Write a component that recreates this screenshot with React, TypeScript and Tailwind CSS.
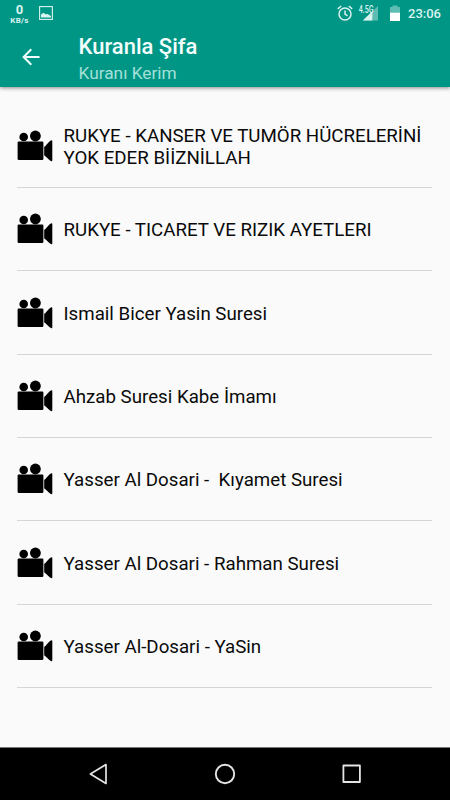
const videos = [
  'RUKYE - KANSER VE TUMÖR HÜCRELERİNİ YOK EDER BİİZNİLLAH',
  'RUKYE - TICARET VE RIZIK AYETLERI',
  'Ismail Bicer Yasin Suresi',
  'Ahzab Suresi Kabe İmamı',
  'Yasser Al Dosari -  Kıyamet Suresi',
  'Yasser Al Dosari - Rahman Suresi',
  'Yasser Al-Dosari - YaSin',
];

function CameraIcon() {
  return (
    <svg className="h-8 w-9 shrink-0" viewBox="0 0 36 32" fill="#000">
      <circle cx="6.7" cy="7" r="4.3" />
      <circle cx="18.4" cy="6" r="5.4" />
      <rect x="0.6" y="11.5" width="25.8" height="18.5" rx="1.2" />
      <path d="M27.2 16.7C28.8 16.1 31.8 11.5 33.9 10.4Q35.3 9.8 35.3 11.1V30.2Q35.3 31.7 33.9 31.1C31.8 29.8 28.8 26 27.2 25.4Z" />
    </svg>
  );
}

function StatusBar() {
  return (
    <div className="flex h-[27px] items-start justify-between pr-[9px] pl-[10px] text-[#d9f3ef]">
      <div className="flex">
        <div className="flex w-[19px] flex-col items-center pt-[2px] font-bold">
          <span className="text-[13px] leading-[15px]">0</span>
          <span className="text-[8px] leading-[7px] tracking-[0.3px]">KB/s</span>
        </div>
        <svg className="mt-[6px] ml-[10px] h-[14px] w-[14px]" viewBox="0 0 14 14">
          <rect x="0.6" y="0.6" width="12.8" height="12.8" fill="none" stroke="currentColor" strokeWidth="1.1" />
          <path d="M2 11.5V8.5L4.5 6.8 6.5 8.3 8.5 8 12 10V11.5Z" fill="currentColor" />
        </svg>
      </div>
      <div className="flex">
        <svg
          className="mt-[5px] h-4 w-4"
          viewBox="0 0 16 16"
          fill="none"
          stroke="currentColor"
          strokeWidth="1.5"
        >
          <circle cx="8" cy="9" r="6" />
          <path d="M8 5.5V9.2L10.6 10.8M0.8 3.8L4.2 1M15.2 3.8L11.8 1" />
        </svg>
        <svg className="mt-px ml-[5px] h-5 w-[21px]" viewBox="0 -2 21 20">
          <path d="M20 3V17.5H5Z" fill="#5dbdb2" />
          <path d="M14.3 8.3V17.5H4.8Z" fill="currentColor" />
          <text x="0.7" y="9.6" fill="currentColor" fontSize="10.5" fontWeight="500" textLength="14.8" lengthAdjust="spacingAndGlyphs">
            4.5G
          </text>
        </svg>
        <svg className="mt-[5px] ml-[11px] h-4 w-[10px]" viewBox="0 0 10 16">
          <path d="M0 2H2.5V0.5H7.5V2H10V8H0Z" fill="#5dbdb2" />
          <path d="M0 7.7H10V16H0Z" fill="#fff" />
        </svg>
        <span className="mt-[6px] ml-[8px] w-[33px] text-[13px] leading-[16px] font-medium">23:06</span>
      </div>
    </div>
  );
}

function AppBar() {
  return (
    <div className="flex h-[60px] pl-[22px]">
      <svg
        className="mt-[21px] h-[18px] w-[18px]"
        viewBox="0 0 18 18"
        fill="none"
        stroke="#f0fffd"
        strokeWidth="2"
      >
        <path d="M17.5 9H2M9.3 1.3L1.6 9L9.3 16.7" />
      </svg>
      <div className="ml-[38.5px] flex flex-col pt-[6px]">
        <h1 className="text-[22px] leading-[27px] font-medium text-[#f4fffd]">Kuranla Şifa</h1>
        <p className="text-[17.3px] leading-[26px] text-[#a5e0d8]">Kuranı Kerim</p>
      </div>
    </div>
  );
}

function NavBar() {
  return (
    <nav className="flex h-[53px] items-center justify-between border-t border-[#777] bg-black px-[88px]">
      <svg className="h-[22px] w-5" viewBox="0 0 20 22" fill="none" stroke="#e4e4e4" strokeWidth="1.7" strokeLinejoin="round">
        <path d="M18 1.6V20.4L2.4 11Z" />
      </svg>
      <svg className="h-[22px] w-[22px]" viewBox="0 0 22 22" fill="none" stroke="#e4e4e4" strokeWidth="1.9">
        <circle cx="11" cy="11" r="9.2" />
      </svg>
      <svg className="h-[22px] w-5" viewBox="0 0 20 22" fill="none" stroke="#e4e4e4" strokeWidth="1.8" strokeLinejoin="round">
        <rect x="1.4" y="2.5" width="16.5" height="16.5" />
      </svg>
    </nav>
  );
}

export default function App() {
  return (
    <div className="flex h-[800px] w-[450px] flex-col bg-[#fafafa] font-['Roboto',sans-serif]">
      <header className="h-[87px] shrink-0 bg-[#009686] shadow-[0_1px_4px_rgba(0,0,0,0.45)]">
        <StatusBar />
        <AppBar />
      </header>
      <ul className="flex-1 pt-[17.9px] pr-[18px] pl-[17px]">
        {videos.map((title) => (
          <li
            key={title}
            className="flex h-[83.3px] items-center gap-[10.5px] border-b border-[#d5d5d5]"
          >
            <CameraIcon />
            <span className="min-w-0 flex-1 pt-[2px] text-[18.72px] leading-[22px] whitespace-pre-wrap text-[#0a0a0a]">
              {title}
            </span>
          </li>
        ))}
      </ul>
      <NavBar />
    </div>
  );
}
